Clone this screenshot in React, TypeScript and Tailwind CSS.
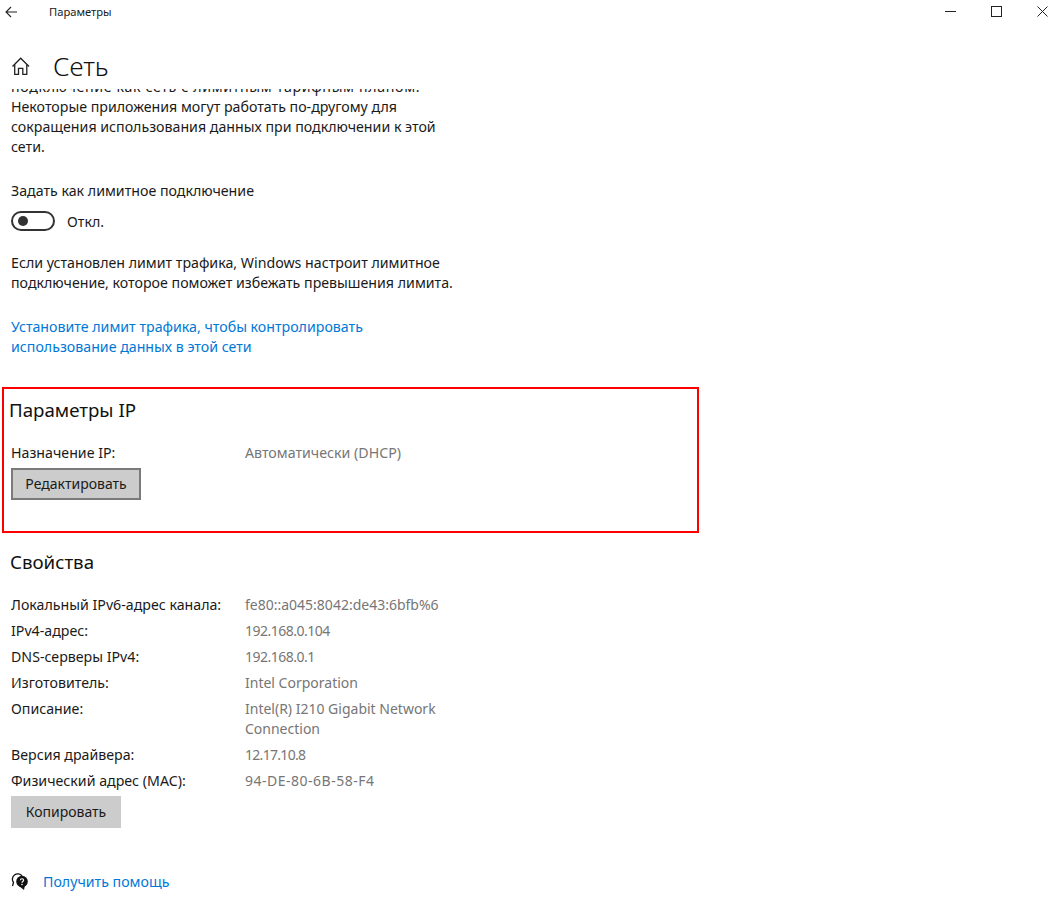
const props = [
  { label: "Локальный IPv6-адрес канала:", value: "fe80::a045:8042:de43:6bfb%6", fit: "" },
  { label: "IPv4-адрес:", value: "192.168.0.104", fit: "tracking-[-0.5px]" },
  { label: "DNS-серверы IPv4:", value: "192.168.0.1", fit: "tracking-[-0.5px]" },
  { label: "Изготовитель:", value: "Intel Corporation", fit: "" },
];

const props2 = [
  { label: "Версия драйвера:", value: "12.17.10.8", fit: "tracking-[-0.7px]" },
  { label: "Физический адрес (MAC):", value: "94-DE-80-6B-58-F4", fit: "tracking-[0.5px]" },
];

const Row = ({ label, value, fit }: { label: string; value: string; fit: string }) => (
  <div className="flex h-[26px] items-center">
    <div className="w-[234px] text-[#1a1a1a]">{label}</div>
    <div className={`text-[14px] text-[#767676] ${fit}`}>{value}</div>
  </div>
);

const App = () => {
  return (
    <div className="flex h-[906px] w-[1063px] flex-col overflow-hidden bg-white font-['Noto_Sans','Open_Sans',sans-serif] text-[14.2px] leading-[20px] text-[#1a1a1a]">
      {/* Title bar */}
      <div className="flex h-[24px] items-center">
        <svg className="ml-[5px] h-[12px] w-[12px]" viewBox="0 0 12 12" fill="none" stroke="#222" strokeWidth="1.1">
          <path d="M12 6H1M6 1L1 6l5 5" />
        </svg>
        <span className="ml-[32px] text-[11.2px]">Параметры</span>
        <div className="mb-[2px] ml-auto flex items-center">
          <div className="h-px w-[11px] bg-[#222]" />
          <div className="ml-[35px] h-[11px] w-[11px] border border-[#222]" />
          <svg className="ml-[35px] mr-[15px] h-[11px] w-[11px]" viewBox="0 0 11 11" fill="none" stroke="#222">
            <path d="M0.5 0.5L10.5 10.500M10.5 0.5L0.5 10.500" />
          </svg>
        </div>
      </div>

      {/* Header */}
      <div className="mt-[23px] flex h-[42px] items-center pb-[4px] pl-[12px]">
        <svg className="h-[18px] w-[18px]" viewBox="0 0 18 18" fill="none" stroke="#222" strokeWidth="1.300">
          <path d="M0.500 9.500L8.700 1.200L17 9.500" />
          <path d="M2.700 7.500V17.300H6.500V11.300H10.800V17.300H14.800V7.500" />
        </svg>
        <h1 className="ml-[23px] text-[26px] font-light leading-[38px] text-[#111]">Сеть</h1>
      </div>

      {/* Scrolling content */}
      <div className="h-0 flex-1 overflow-hidden">
        <div className="-mt-[12px] pl-[11px]">
          <p className="tracking-[0.65px]">подключение как сеть с лимитным тарифным планом.</p>
          <p>
            Некоторые приложения могут работать по-другому для
            <br />
            сокращения использования данных при подключении к этой
            <br />
            сети.
          </p>
          <p className="mt-[24px]">Задать как лимитное подключение</p>
          <div className="mt-[9px] flex items-center">
            <div className="flex h-[20px] w-[44px] items-center rounded-full border-2 border-[#333] pl-[5px]">
              <div className="h-[10px] w-[10px] rounded-full bg-[#333]" />
            </div>
            <span className="ml-[12px] pt-[2px]">Откл.</span>
          </div>
          <p className="mt-[21px]">
            Если установлен лимит трафика, Windows настроит лимитное
            <br />
            подключение, которое поможет избежать превышения лимита.
          </p>
          <p className="mt-[24px] text-[#0078d7]">
            Установите лимит трафика, чтобы контролировать
            <br />
            использование данных в этой сети
          </p>
        </div>

        {/* Highlighted section */}
        <div className="ml-[2px] mt-[30px] h-[146px] w-[697px] border-2 border-[#fe0000] pl-[5px] pt-[8px]">
          <h2 className="text-[18.7px] leading-[26px] text-[#111]">Параметры IP</h2>
          <div className="ml-[2px] mt-[20px] flex h-[20px] items-center">
            <div className="w-[234px]">Назначение IP:</div>
            <div className="text-[#767676]">Автоматически (DHCP)</div>
          </div>
          <button className="ml-[2px] mt-[5px] h-[32px] w-[130px] border-2 border-[#7a7a7a] bg-[#cccccc] text-[14px]">
            Редактировать
          </button>
        </div>

        <div className="pl-[10px]">
          <h2 className="mt-[16px] text-[18.7px] leading-[26px] text-[#111]">Свойства</h2>
          <div className="ml-px mt-[17px]">
            {props.map((p) => (
              <Row key={p.label} label={p.label} value={p.value} fit={p.fit} />
            ))}
            <div className="flex pt-[3px]">
              <div className="w-[234px]">Описание:</div>
              <div className="w-[210px] text-[14px] text-[#767676]">Intel(R) I210 Gigabit Network Connection</div>
            </div>
            <div className="mt-[3px]">
              {props2.map((p) => (
                <Row key={p.label} label={p.label} value={p.value} fit={p.fit} />
              ))}
            </div>
          </div>
          <button className="ml-px mt-[2px] h-[32px] w-[110px] bg-[#cccccc] text-[14px]">Копировать</button>
          <div className="ml-px mt-[44px] flex items-center">
            <svg className="h-[18px] w-[17px]" viewBox="0 0 17 18">
              <path d="M1.500 13L2.500 9.500A5.200 5.200 0 1 1 11 3" fill="none" stroke="#111" strokeWidth="1.300" />
              <circle cx="11" cy="8.500" r="5.800" fill="#111" />
              <path d="M8 13L13 17L14 12Z" fill="#111" />
              <path d="M9.400 7.300c0-2.100 3.200-2.100 3.200 0 0 1.200-1.600 1.200-1.600 2.400" fill="none" stroke="#fff" strokeWidth="1.200" />
              <circle cx="11" cy="11.500" r=".8" fill="#fff" />
            </svg>
            <span className="ml-[15px] text-[#0078d7]">Получить помощь</span>
          </div>
        </div>
      </div>
    </div>
  );
};

export default App;
